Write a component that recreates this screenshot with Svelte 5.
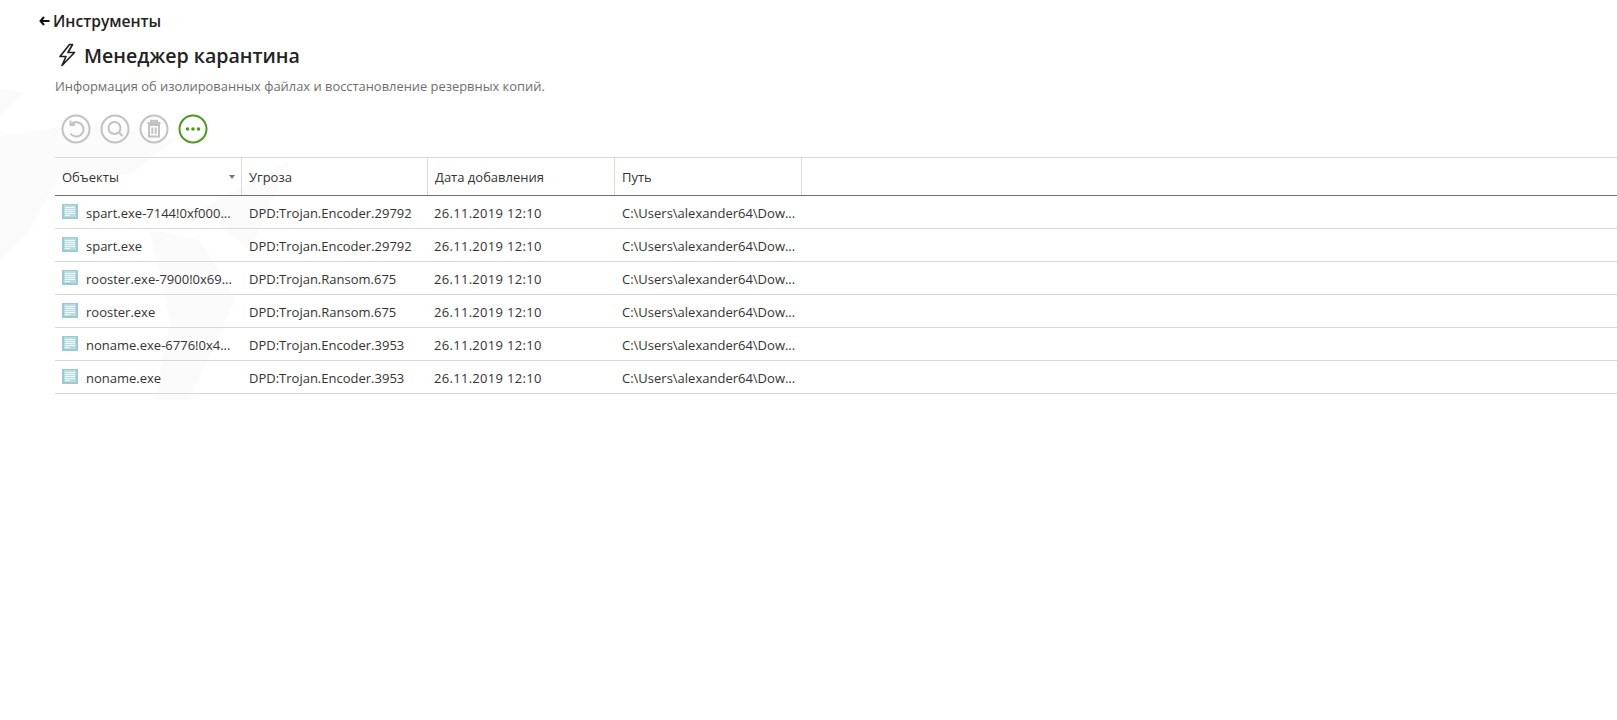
<script>
    const rows = [
        { name: "spart.exe-7144!0xf000...", threat: "DPD:Trojan.Encoder.29792" },
        { name: "spart.exe", threat: "DPD:Trojan.Encoder.29792" },
        { name: "rooster.exe-7900!0x69...", threat: "DPD:Trojan.Ransom.675" },
        { name: "rooster.exe", threat: "DPD:Trojan.Ransom.675" },
        { name: "noname.exe-6776!0x4...", threat: "DPD:Trojan.Encoder.3953" },
        { name: "noname.exe", threat: "DPD:Trojan.Encoder.3953" }
    ];
    const date = "26.11.2019 12:10";
    const path = "C:\\Users\\alexander64\\Dow...";
</script>

<div class="page">
    <!--WATERMARK-->
    <svg class="watermark" width="300" height="340" viewBox="0 0 300 340">
        <path d="M0 10 L24 12 L0 36 Z M0 56 L100 42 L175 60 L130 95 L60 95 L30 150 L0 180 Z M150 150 L200 160 L235 220 L190 320 L155 320 L170 240 Z M200 130 L290 80 L250 170 Z" fill="#fbfbfb"/>
    </svg>

    <!--HEADER-->
    <a class="back" href="#top">
        <svg width="11" height="10" viewBox="0 0 11 10">
            <path d="M5 1 L1.5 5 L5 9 M1.5 5 H10.5" fill="none" stroke="#111" stroke-width="2"/>
        </svg>
        <span>Инструменты</span>
    </a>
    <div class="title">
        <svg width="20" height="24" viewBox="0 0 20 24">
            <path d="M12.5 1.5 L3 13.5 H9 L5 22.5 L17.5 9.5 H11 L15.5 1.5 Z" fill="none" stroke="#222" stroke-width="1.7" stroke-linejoin="round"/>
        </svg>
        <h1>Менеджер карантина</h1>
    </div>
    <p class="subtitle">Информация об изолированных файлах и восстановление резервных копий.</p>

    <!--TOOLBAR-->
    <div class="toolbar">
        <svg width="30" height="30" viewBox="0 0 30 30" fill="none" stroke="#c2c2c2" stroke-width="2">
            <circle cx="15" cy="15" r="13.5"/>
            <path d="M10.5 10 A7.2 7.2 0 1 1 9.5 19.5"/>
            <path d="M9.5 6.5 V11 H14"/>
        </svg>
        <svg width="30" height="30" viewBox="0 0 30 30" fill="none" stroke="#c2c2c2" stroke-width="2">
            <circle cx="15" cy="15" r="13.5"/>
            <circle cx="14.5" cy="14" r="6"/>
            <path d="M19 18.5 L22.5 22"/>
        </svg>
        <svg width="30" height="30" viewBox="0 0 30 30" fill="none" stroke="#c2c2c2" stroke-width="2">
            <circle cx="15" cy="15" r="13.5"/>
            <path d="M8.5 9 H21.5 M12 9 V6.8 H18 V9 M10 11 H20 V22.5 H10 Z M13.3 13.5 V20 M16.7 13.5 V20"/>
        </svg>
        <svg width="30" height="30" viewBox="0 0 30 30" fill="none">
            <circle cx="15" cy="15" r="13.5" stroke="#4c9a1e" stroke-width="2"/>
            <circle cx="9.5" cy="15" r="1.8" fill="#4c9a1e"/>
            <circle cx="15" cy="15" r="1.8" fill="#4c9a1e"/>
            <circle cx="20.5" cy="15" r="1.8" fill="#4c9a1e"/>
        </svg>
    </div>

    <!--TABLE-->
    <div class="table">
        <div class="row head">
            <div class="cell">Объекты<span class="sort"></span></div>
            <div class="cell">Угроза</div>
            <div class="cell">Дата добавления</div>
            <div class="cell">Путь</div>
        </div>
        {#each rows as row}
            <div class="row">
                <div class="cell name">
                    <svg width="16" height="15" viewBox="0 0 16 15">
                        <rect x="0" y="0" width="16" height="15" fill="#9cc9d4"/>
                        <rect x="2" y="1" width="12" height="12" fill="#b9dce4"/>
                        <path d="M3 3.5 H13 M3 5.5 H13 M3 7.5 H13 M3 9.5 H13 M3 11.5 H8" stroke="#f2f9fa"/>
                    </svg>
                    <span>{row.name}</span>
                </div>
                <div class="cell">{row.threat}</div>
                <div class="cell date">{date}</div>
                <div class="cell">{path}</div>
            </div>
        {/each}
    </div>
</div>

<style>
    :global(body) {
        background-color: #ffffff;
    }
    .page {
        position: relative;
        height: 720px;
        overflow: hidden;
        padding: 10px 0 0 55px;
        box-sizing: border-box;
        font-family: "Open Sans", sans-serif;
        color: #333;
    }
    .watermark {
        position: absolute;
        left: 0;
        top: 80px;
    }
    .back {
        position: relative;
        display: flex;
        align-items: center;
        gap: 3px;
        height: 22px;
        margin-left: -16px;
        font-size: 15.6px;
        font-weight: 600;
        color: #222;
        text-decoration: none;
    }
    .title {
        position: relative;
        display: flex;
        align-items: center;
        gap: 7px;
        height: 32px;
        margin-top: 7px;
        margin-left: 2px;
    }
    .title h1 {
        margin: 0;
        font-size: 19.6px;
        font-weight: 600;
        color: #222;
    }
    .subtitle {
        position: relative;
        margin: 6px 0 0 0;
        font-size: 12.9px;
        line-height: 18px;
        color: #6e6e6e;
    }
    .toolbar {
        position: relative;
        display: flex;
        gap: 9px;
        margin: 19px 0 0 6px;
        height: 30px;
    }
    .table {
        position: relative;
        margin-top: 13px;
        border-top: 1px solid #d9d9d9;
    }
    .row {
        display: flex;
        height: 32px;
        border-bottom: 1px solid #d9d9d9;
        font-size: 13px;
    }
    .row .cell {
        padding-top: 2px;
    }
    .head {
        height: 37px;
        border-bottom-color: #6f6f6f;
    }
    .head .cell {
        padding-top: 0;
        border-right: 1px solid #d9d9d9;
    }
    .cell {
        position: relative;
        display: flex;
        align-items: center;
        width: 186px;
        padding-left: 7px;
        box-sizing: border-box;
        white-space: nowrap;
    }
    .cell:first-child,
    .cell:nth-child(3),
    .cell:last-child {
        width: 187px;
    }
    .date {
        padding-left: 6px;
        letter-spacing: 0.3px;
    }
    .name {
        gap: 8px;
    }
    .name svg {
        margin-top: -4px;
    }
    .sort {
        position: absolute;
        right: 6px;
        top: 17px;
        border-left: 3.5px solid transparent;
        border-right: 3.5px solid transparent;
        border-top: 4px solid #777;
    }
</style>
